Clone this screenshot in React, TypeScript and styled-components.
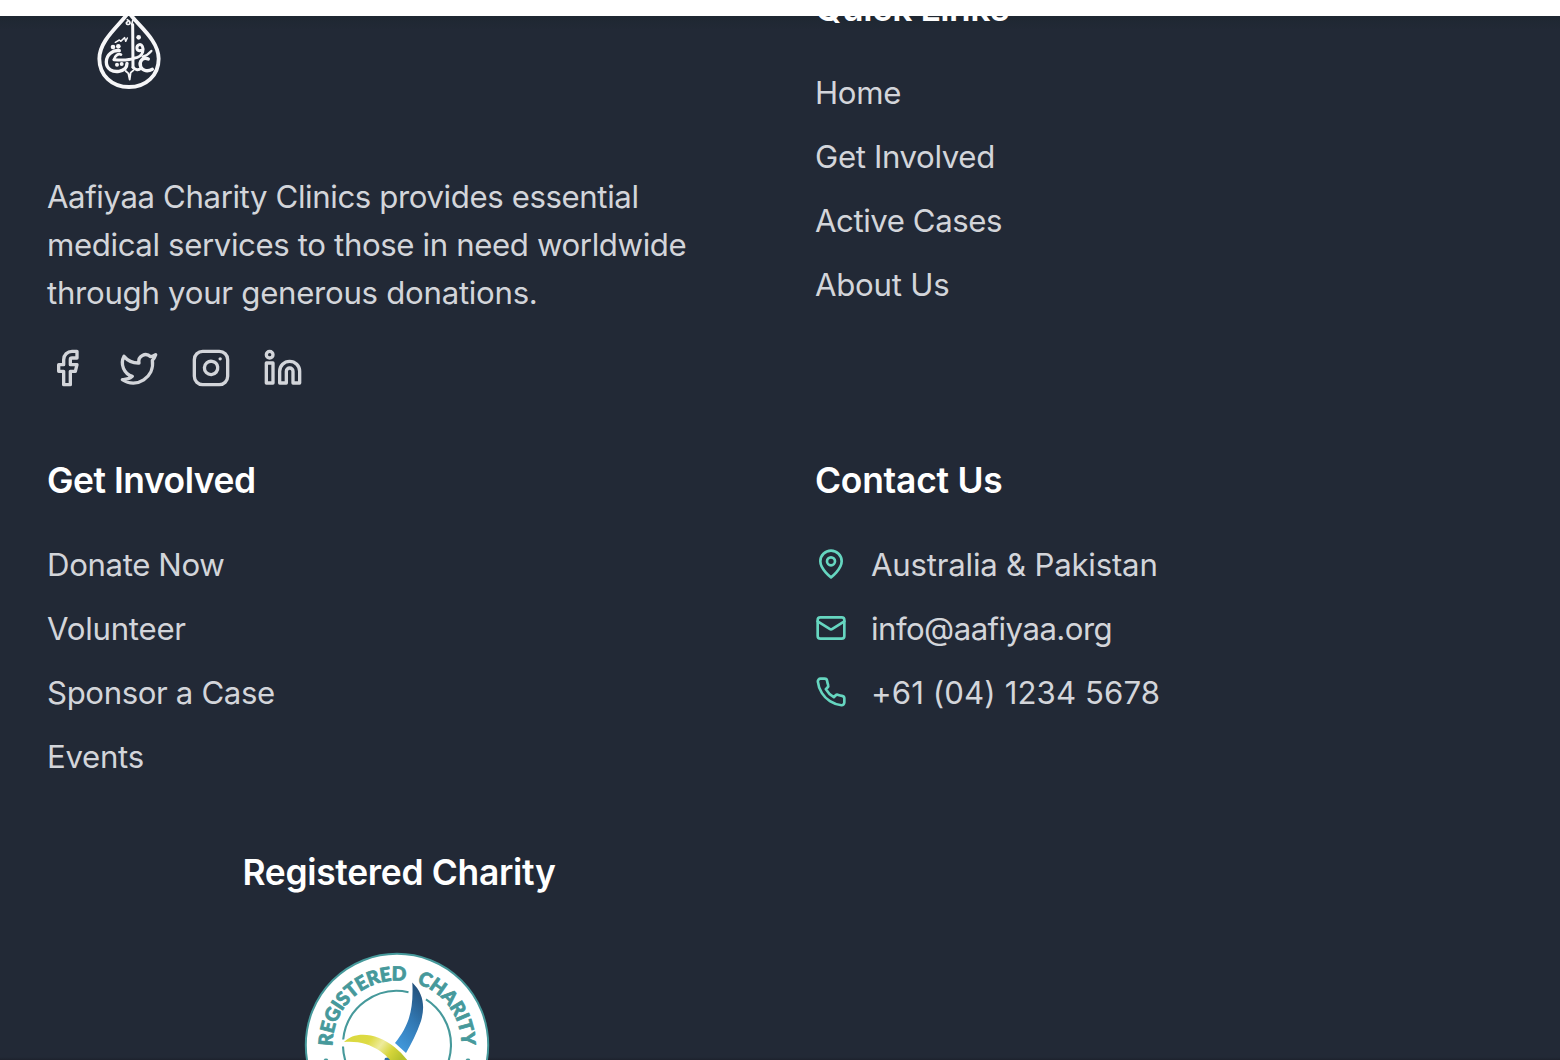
import React from "react";
import styled, { createGlobalStyle } from "styled-components";

const Global = createGlobalStyle`
  * { box-sizing: border-box; }
  html, body { margin: 0; padding: 0; background: #fff; }
  body { font-family: Inter, "Liberation Sans", sans-serif; overflow: hidden; }
`;

const Page = styled.div`
  width: 100%;
  height: 1060px;
  display: flex;
  flex-direction: column;
  overflow: hidden;
`;

const TopBar = styled.header`
  flex: 0 0 16px;
  background: #fff;
`;

const Footer = styled.footer`
  flex: 1;
  min-height: 0;
  overflow: hidden;
  background: linear-gradient(#1e2731 0, #222936 14px, #222936 calc(100% - 3px), #1d222d 100%);
  color: #d3d5da;
`;

const Grid = styled.div`
  display: grid;
  grid-template-columns: 704px 704px;
  grid-template-rows: 408px 328px auto;
  gap: 64px;
  padding: 0 41px 0 47px;
  margin-top: -35px;
`;

const Column = styled.section<{ $center?: boolean }>`
  display: flex;
  flex-direction: column;
  align-items: ${(p) => (p.$center ? "center" : "flex-start")};
`;

const Heading = styled.h3<{ $track?: number }>`
  margin: 0 0 32px;
  font-size: 35.4px;
  line-height: 56px;
  font-weight: 600;
  letter-spacing: ${(p) => p.$track ?? -0.4}px;
  color: #fff;
  white-space: nowrap;
`;

const List = styled.ul`
  list-style: none;
  margin: 0;
  padding: 0;
  display: flex;
  flex-direction: column;
  gap: 16px;
`;

const Item = styled.li`
  display: flex;
  align-items: center;
  gap: 24px;
  height: 48px;
`;

const Label = styled.span<{ $track?: number }>`
  display: block;
  font-size: 31.2px;
  line-height: 48px;
  letter-spacing: ${(p) => p.$track ?? 0}px;
  white-space: nowrap;
`;

const Blurb = styled.p`
  margin: 0 0 32px;
  display: flex;
  flex-direction: column;
`;

const LogoBox = styled.div`
  width: 164px;
  height: 192px;
  padding: 29px 0 0 49.2px;
`;

const Socials = styled.div`
  display: flex;
  gap: 32px;
  margin-top: -1px;
`;

const Icon = styled.svg<{ $size: number; $color?: string }>`
  display: block;
  flex: none;
  width: ${(p) => p.$size}px;
  height: ${(p) => p.$size}px;
  fill: none;
  stroke: ${(p) => p.$color ?? "#d3d5da"};
  stroke-width: 2;
  stroke-linecap: round;
  stroke-linejoin: round;
`;

const ContactIcon = styled(Icon)`
  margin-top: -2px;
`;

const Drawing = styled.svg`
  display: block;
  overflow: visible;
`;

const SealBox = styled.div`
  margin: 19.5px 4px 0 0;
`;

const TEAL = "#66d6c0";

const Logo = () => (
  <Drawing width="68" height="78" viewBox="50 30 204 234" fill="none" stroke="#f6f6f8" strokeLinecap="round" strokeLinejoin="round">
    <path strokeWidth="11.5" d="M148 36 C126 72 60 118 60 176 C60 226 98 261 149 261 C200 261 238 226 238 176 C238 118 170 72 148 36 Z" />
    <path strokeWidth="5" d="M144 59 Q153 63 152 70 Q149 76 142 72 Q139 67 145 65" />
    <path strokeWidth="9" d="M160 74 L161 202" />
    <path strokeWidth="5" d="M157 74 L160 62" />
    <path strokeWidth="9" d="M104 179 Q148 182 163 175 Q186 172 190 156 C194 142 187 132 180 134 C170 137 170 152 182 152 L190 150" />
    <path strokeWidth="10" d="M120 152 C101 149 81 164 81 186 C81 208 101 217 119 214 C136 211 143 201 143 190" />
    <path strokeWidth="8" d="M104 179 C106 168 117 159 125 164" />
    <path strokeWidth="9" d="M161 202 Q173 216 186 204" />
    <path strokeWidth="10" d="M207 177 C191 169 178 184 184 200 C190 214 206 215 219 208" />
    <path strokeWidth="7" d="M190 170 Q204 167 216 153" />
    <path strokeWidth="4.5" d="M108 127 L120 120 L124 124 L136 113 L139 124 L144 114" />
    <path strokeWidth="5.5" d="M139 213 L147 220 L151 239 L154 218 L162 211" />
    <g fill="#f6f6f8" stroke="none">
      <circle cx="101" cy="141" r="7" />
      <circle cx="117" cy="139" r="7" />
      <circle cx="178" cy="112" r="7" />
      <circle cx="127" cy="192" r="6" />
      <circle cx="113" cy="194" r="6" />
    </g>
  </Drawing>
);

const Seal = () => (
  <Drawing width="184" height="184" viewBox="-92 -92 184 184">
    <defs>
      <path id="arc" d="M-64.5 1.5 L-64.5 0 A64.5 64.5 0 0 1 64.5 0 L64.5 3" />
      <linearGradient id="blue" x1="0.7" y1="0" x2="0.3" y2="1">
        <stop offset="0" stopColor="#23507a" />
        <stop offset="0.5" stopColor="#3279b4" />
        <stop offset="1" stopColor="#4299dc" />
      </linearGradient>
      <linearGradient id="lime" x1="0" y1="0" x2="1" y2="0.4">
        <stop offset="0" stopColor="#d9d83c" />
        <stop offset="0.4" stopColor="#dedb45" />
        <stop offset="0.6" stopColor="#eeeb9c" />
        <stop offset="0.8" stopColor="#d6d53a" />
        <stop offset="1" stopColor="#b6c22d" />
      </linearGradient>
    </defs>
    <circle r="91.2" fill="#fff" stroke="#46999b" strokeWidth="2" />
    <g fill="none" stroke="#46999b" strokeWidth="2.1">
      <path d="M-53.8 -5.5 A54 54 0 0 1 11.5 -52.8" />
      <path d="M29 -45.6 A54 54 0 1 1 -54 1.5" />
    </g>
    <g fill="#46999b" stroke="#46999b" strokeWidth="0.8" strokeLinejoin="round" fontFamily="Lato, sans-serif" fontWeight="900" fontSize="19.3">
      <text><textPath href="#arc" startOffset="0.3" textLength="111.5">REGISTERED</textPath></text>
      <text><textPath href="#arc" startOffset="122.5" textLength="82">CHARITY</textPath></text>
    </g>
    <circle cx="-71" cy="16" r="2.4" fill="#46999b" />
    <circle cx="71" cy="16" r="2.4" fill="#46999b" />
    <path d="M15.3 -62.5 C27 -51 28 -38 24 -24 C20 -12 14 -1 9 8 L-2 -2 C10 -17 17 -32 15.3 -62.5 Z" fill="url(#blue)" />
    <path d="M-12 13 L-7 12 L-3 20 L-14 20 Z" fill="#2f6ea6" />
    <path d="M-53 -3 C-43 -14 -20 -13 -2 2.5 Q5 8 11 16 L11 24 L0 24 Q-8 12 -17 6 C-28 -1 -38 -4 -53 -3 Z" fill="url(#lime)" />
  </Drawing>
);

const blurb = [
  { text: "Aafiyaa Charity Clinics provides essential", track: -0.4 },
  { text: "medical services to those in need worldwide", track: -0.38 },
  { text: "through your generous donations.", track: -0.28 },
];
const quick = [
  { text: "Home", track: -0.35 },
  { text: "Get Involved", track: -0.37 },
  { text: "Active Cases", track: -0.45 },
  { text: "About Us", track: -0.25 },
];
const involved = [
  { text: "Donate Now", track: -0.38 },
  { text: "Volunteer", track: -0.25 },
  { text: "Sponsor a Case", track: -0.38 },
  { text: "Events", track: -0.3 },
];

export default function App() {
  return (
    <Page>
      <Global />
      <TopBar />
      <Footer>
        <Grid>
          <Column>
            <LogoBox><Logo /></LogoBox>
            <Blurb>
              {blurb.map((b) => <Label key={b.text} $track={b.track}>{b.text}</Label>)}
            </Blurb>
            <Socials>
              <Icon $size={40} viewBox="0 0 24 24">
                <path d="M18 2h-3a5 5 0 0 0-5 5v3H7v4h3v8h4v-8h3l1-4h-4V7a1 1 0 0 1 1-1h3z" />
              </Icon>
              <Icon $size={40} viewBox="0 0 24 24">
                <path d="M22 4s-.7 2.1-2 3.4c1.6 10-9.4 17.3-18 11.6 2.2.1 4.4-.6 6-2C3 15.5.5 9.6 3 5c2.2 2.6 5.6 4.1 9 4-.9-4.2 4-6.6 7-3.8 1.1 0 3-1.2 3-1.2z" />
              </Icon>
              <Icon $size={40} viewBox="0 0 24 24">
                <rect x="2" y="2" width="20" height="20" rx="5" />
                <path d="M16 11.37A4 4 0 1 1 12.63 8 4 4 0 0 1 16 11.37z" />
                <path d="M17.5 6.5h.01" />
              </Icon>
              <Icon $size={40} viewBox="0 0 24 24">
                <path d="M16 8a6 6 0 0 1 6 6v7h-4v-7a2 2 0 0 0-4 0v7h-4v-7a6 6 0 0 1 6-6z" />
                <rect x="2" y="9" width="4" height="12" />
                <circle cx="4" cy="4" r="2" />
              </Icon>
            </Socials>
          </Column>
          <Column>
            <Heading>Quick Links</Heading>
            <List>
              {quick.map((t) => <Item key={t.text}><Label $track={t.track}>{t.text}</Label></Item>)}
            </List>
          </Column>
          <Column>
            <Heading $track={-0.46}>Get Involved</Heading>
            <List>
              {involved.map((t) => <Item key={t.text}><Label $track={t.track}>{t.text}</Label></Item>)}
            </List>
          </Column>
          <Column>
            <Heading $track={-0.22}>Contact Us</Heading>
            <List>
              <Item>
                <ContactIcon $size={32} $color={TEAL} viewBox="0 0 24 24">
                  <path d="M20 10c0 6-8 12-8 12s-8-6-8-12a8 8 0 0 1 16 0Z" />
                  <circle cx="12" cy="10" r="3" />
                </ContactIcon>
                <Label $track={-0.22}>Australia &amp; Pakistan</Label>
              </Item>
              <Item>
                <ContactIcon $size={32} $color={TEAL} viewBox="0 0 24 24">
                  <rect x="2" y="4" width="20" height="16" rx="2" />
                  <path d="m22 7-8.97 5.7a1.94 1.94 0 0 1-2.06 0L2 7" />
                </ContactIcon>
                <Label $track={-0.55}>info@aafiyaa.org</Label>
              </Item>
              <Item>
                <ContactIcon $size={32} $color={TEAL} viewBox="0 0 24 24">
                  <path d="M22 16.92v3a2 2 0 0 1-2.18 2 19.79 19.79 0 0 1-8.63-3.07 19.5 19.5 0 0 1-6-6 19.79 19.79 0 0 1-3.07-8.67A2 2 0 0 1 4.11 2h3a2 2 0 0 1 2 1.72 12.84 12.84 0 0 0 .7 2.81 2 2 0 0 1-.45 2.11L8.09 9.91a16 16 0 0 0 6 6l1.27-1.27a2 2 0 0 1 2.11-.45 12.84 12.84 0 0 0 2.81.7A2 2 0 0 1 22 16.92z" />
                </ContactIcon>
                <Label $track={0.1}>+61 (04) 1234 5678</Label>
              </Item>
            </List>
          </Column>
          <Column $center>
            <Heading $track={-0.3}>Registered Charity</Heading>
            <SealBox><Seal /></SealBox>
          </Column>
        </Grid>
      </Footer>
    </Page>
  );
}
